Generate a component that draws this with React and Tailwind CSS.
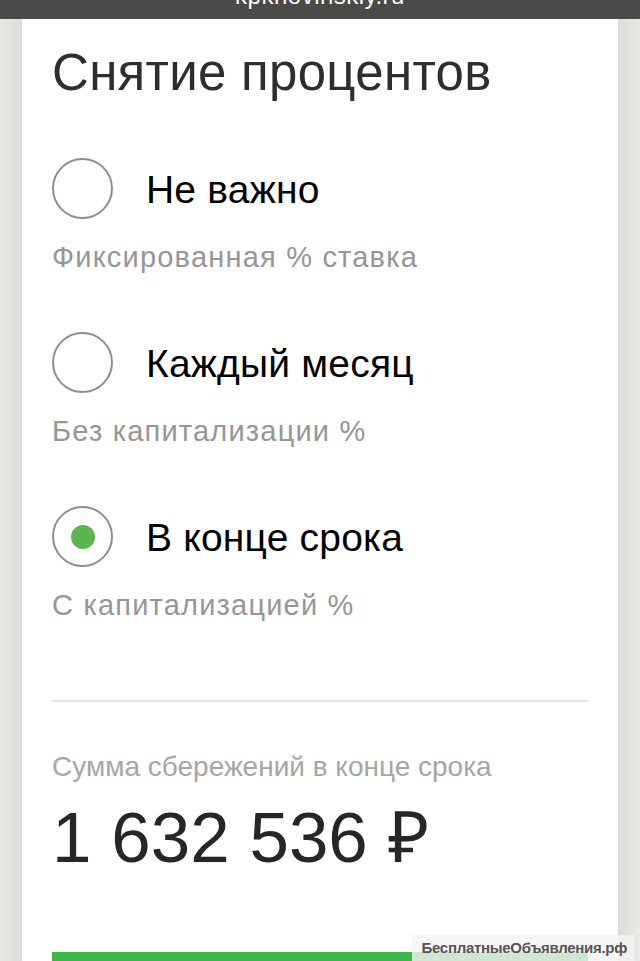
import React from "react";

const options = [
  { title: "Не важно", sub: "Фиксированная % ставка", checked: false },
  { title: "Каждый месяц", sub: "Без капитализации %", checked: false },
  { title: "В конце срока", sub: "С капитализацией %", checked: true },
];

function Radio({ checked }) {
  return (
    <div className="w-[61px] h-[61px] rounded-full border-2 border-[#8e8e8e] flex items-center justify-center shrink-0">
      {checked && <div className="w-[24px] h-[24px] rounded-full bg-[#5cb551]" />}
    </div>
  );
}

export default function App() {
  return (
    <div
      className="w-[640px] h-[961px] overflow-hidden relative bg-[#e6e6e2] flex flex-col"
      style={{ fontFamily: '"Liberation Sans", Arial, sans-serif' }}
    >
      <div className="h-[19px] bg-[#4a4a48] overflow-hidden flex justify-center shrink-0">
        <div className="text-white text-[24px] leading-[24px] -mt-[16px] tracking-[0.5px]">kpknovinskiy.ru</div>
      </div>
      <div className="flex flex-1 min-h-0">
        <div className="w-[22px] bg-gradient-to-r from-[#e9e9e5] to-[#dcdcd8] shrink-0" />
        <div className="flex-1 bg-white flex flex-col pl-[30px] pr-[30px] pt-[26px]">
          <h1 className="text-[51px] leading-[56px] text-[#2e2e2e] tracking-[0.3px]">Снятие процентов</h1>
          <div className="flex flex-col mt-[57px]">
            {options.map((o, i) => (
              <div key={i} className={i > 0 ? "mt-[60px]" : ""}>
                <div className="flex items-center gap-[33px]">
                  <Radio checked={o.checked} />
                  <span className="text-[39px] leading-[44px] text-black mt-[2px] tracking-[0.2px]">{o.title}</span>
                </div>
                <div className="mt-[23px] text-[29px] leading-[30px] text-[#969696] tracking-[1.2px]">{o.sub}</div>
              </div>
            ))}
          </div>
          <div className="mt-[80px] h-[2px] bg-[#e3e3e3]" />
          <div className="mt-[50px] text-[28px] leading-[30px] text-[#a6a6a6]">Сумма сбережений в конце срока</div>
          <div className="mt-[18px] text-[71px] leading-[76px] text-[#262626]">1 632 536 ₽</div>
          <div className="mt-[76px] h-[12px] bg-[#3cb54a]" />
        </div>
        <div className="w-[22px] bg-gradient-to-r from-[#dcdcd8] to-[#e9e9e5] shrink-0" />
      </div>
      <div className="absolute right-[5px] bottom-[0px] h-[26px] pl-[10px] pr-[8px] bg-[#f4f4f4]/80 flex items-center">
        <span className="text-[15px] font-bold text-[#555555] tracking-[-0.3px]">БесплатныеОбъявления.рф</span>
      </div>
    </div>
  );
}
